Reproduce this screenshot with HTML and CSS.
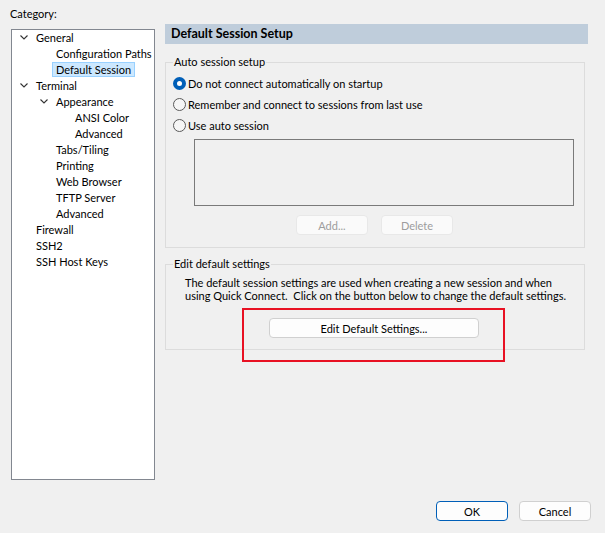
FILE: index.html
```html
<!DOCTYPE html>
<html lang="en">
<head>
    <meta charset="UTF-8">
    <title>Session Options</title>
    <link rel="stylesheet" href="styles.css">
</head>
<body>
<div class="window">
    <div class="main">
        <div class="left">
            <div class="cat-label">Category:</div>
            <div class="tree">
                <div class="row lvl0"><span class="twisty"><svg width="8" height="5" viewBox="0 0 8 5"><polyline points="0.5,0.5 4,4 7.5,0.5" fill="none" stroke="#333" stroke-width="1.1"/></svg></span>General</div>
                <div class="row lvl1"><span class="twisty"></span>Configuration Paths</div>
                <div class="row lvl1"><span class="twisty"></span><span class="selected">Default Session</span></div>
                <div class="row lvl0"><span class="twisty"><svg width="8" height="5" viewBox="0 0 8 5"><polyline points="0.5,0.5 4,4 7.5,0.5" fill="none" stroke="#333" stroke-width="1.1"/></svg></span>Terminal</div>
                <div class="row lvl1"><span class="twisty"><svg width="8" height="5" viewBox="0 0 8 5"><polyline points="0.5,0.5 4,4 7.5,0.5" fill="none" stroke="#333" stroke-width="1.1"/></svg></span>Appearance</div>
                <div class="row lvl2"><span class="twisty"></span>ANSI Color</div>
                <div class="row lvl2"><span class="twisty"></span>Advanced</div>
                <div class="row lvl1"><span class="twisty"></span>Tabs/Tiling</div>
                <div class="row lvl1"><span class="twisty"></span>Printing</div>
                <div class="row lvl1"><span class="twisty"></span>Web Browser</div>
                <div class="row lvl1"><span class="twisty"></span>TFTP Server</div>
                <div class="row lvl1"><span class="twisty"></span>Advanced</div>
                <div class="row lvl0"><span class="twisty"></span>Firewall</div>
                <div class="row lvl0"><span class="twisty"></span>SSH2</div>
                <div class="row lvl0"><span class="twisty"></span>SSH Host Keys</div>
            </div>
        </div>

        <div class="right">
            <div class="header">Default Session Setup</div>

            <fieldset class="group auto">
                <legend>Auto session setup</legend>
                <label class="opt"><span class="radio checked"></span>Do not connect automatically on startup</label>
                <label class="opt"><span class="radio"></span>Remember and connect to sessions from last use</label>
                <label class="opt"><span class="radio"></span>Use auto session</label>
                <div class="listbox"></div>
                <div class="list-buttons">
                    <button class="btn" disabled>Add...</button>
                    <button class="btn" disabled>Delete</button>
                </div>
            </fieldset>

            <fieldset class="group edit">
                <legend>Edit default settings</legend>
                <p class="note">The default session settings are used when creating a new session and when<br>using Quick Connect.&nbsp; Click on the button below to change the default settings.</p>
                <div class="edit-wrap">
                    <button class="btn wide">Edit Default Settings...</button>
                    <div class="highlight"></div>
                </div>
            </fieldset>
        </div>
    </div>

    <div class="footer">
        <button class="btn default">OK</button>
        <button class="btn">Cancel</button>
    </div>
</div>
</body>
</html>
```

FILE: styles.css
```css
body {
    margin: 0;
    background-color: #f0f0f0;
    font-family: "Segoe UI", Lato, sans-serif;
    font-size: 11px;
    color: #000;
}
.window {
    height: 533px;
    display: flex;
    flex-direction: column;
}
.main {
    display: flex;
    gap: 10px;
    padding: 6px 0 0 10px;
}
.left {
    width: 145px;
}
.cat-label {
    line-height: 16px;
    margin-bottom: 7px;
}
.tree {
    margin-left: 1px;
    width: 144px;
    height: 451px;
    box-sizing: border-box;
    border: 1px solid #828790;
    background-color: #fff;
}
.row {
    display: flex;
    align-items: center;
    height: 16px;
    box-sizing: border-box;
    padding-bottom: 1px;
    white-space: nowrap;
}
.lvl0 { padding-left: 4px; }
.lvl1 { padding-left: 24px; }
.lvl2 { padding-left: 43px; }
.twisty {
    width: 20px;
    flex: none;
    display: flex;
    align-items: center;
}
.twisty svg {
    margin-left: 4px;
}
.selected {
    margin-left: -4px;
    padding: 0 3px;
    height: 15px;
    line-height: 14px;
    box-sizing: border-box;
    border: 1px solid #99d1ff;
    background-color: #cce8ff;
}
.right {
    width: 423px;
    padding-top: 18px;
}
.header {
    height: 20px;
    line-height: 20px;
    background-color: #bfcddb;
    font-weight: bold;
    font-size: 12.5px;
    padding-left: 6px;
}
.group {
    margin: 10px 3px 0 0;
    border: 1px solid #dcdcdc;
    padding: 3px 10px 12px 7px;
    min-width: 0;
}
.group legend {
    padding: 0 1px;
    line-height: 16px;
}
.group.edit {
    margin-top: 8px;
    padding-top: 0;
    padding-bottom: 11px;
}
.opt {
    display: flex;
    align-items: center;
    gap: 2px;
    height: 21px;
}
.radio {
    width: 13px;
    height: 13px;
    box-sizing: border-box;
    border-radius: 50%;
    border: 1px solid #5a5a5a;
    background-color: #f6f6f6;
}
.radio.checked {
    border: 4px solid #005fb8;
    background-color: #fff;
}
.listbox {
    margin: 3px 0 0 21px;
    width: 380px;
    height: 67px;
    box-sizing: border-box;
    border: 1px solid #7a7a7a;
}
.list-buttons {
    display: flex;
    gap: 13px;
    margin-top: 9px;
    padding-left: 123px;
}
.btn {
    width: 72px;
    height: 20px;
    box-sizing: border-box;
    padding: 0;
    border: 1px solid #d0d0d0;
    border-radius: 4px;
    background-color: #fdfdfd;
    font: inherit;
    color: #000;
}
.btn:disabled {
    color: #9d9d9d;
    border-color: #e8e8e8;
    background-color: #fafafa;
}
.btn.default {
    border-color: #005fb8;
}
.note {
    margin: 4px 0 0 12px;
    line-height: 13px;
    white-space: nowrap;
}
.edit-wrap {
    position: relative;
    margin: 16px 0 0 96px;
    width: 210px;
}
.btn.wide {
    width: 210px;
    display: block;
}
.highlight {
    position: absolute;
    left: -27px;
    top: -10px;
    width: 263px;
    height: 54px;
    box-sizing: border-box;
    border: 2px solid #e81123;
}
.footer {
    margin-top: auto;
    display: flex;
    justify-content: flex-end;
    gap: 11px;
    padding: 0 14px 12px 0;
}
```
